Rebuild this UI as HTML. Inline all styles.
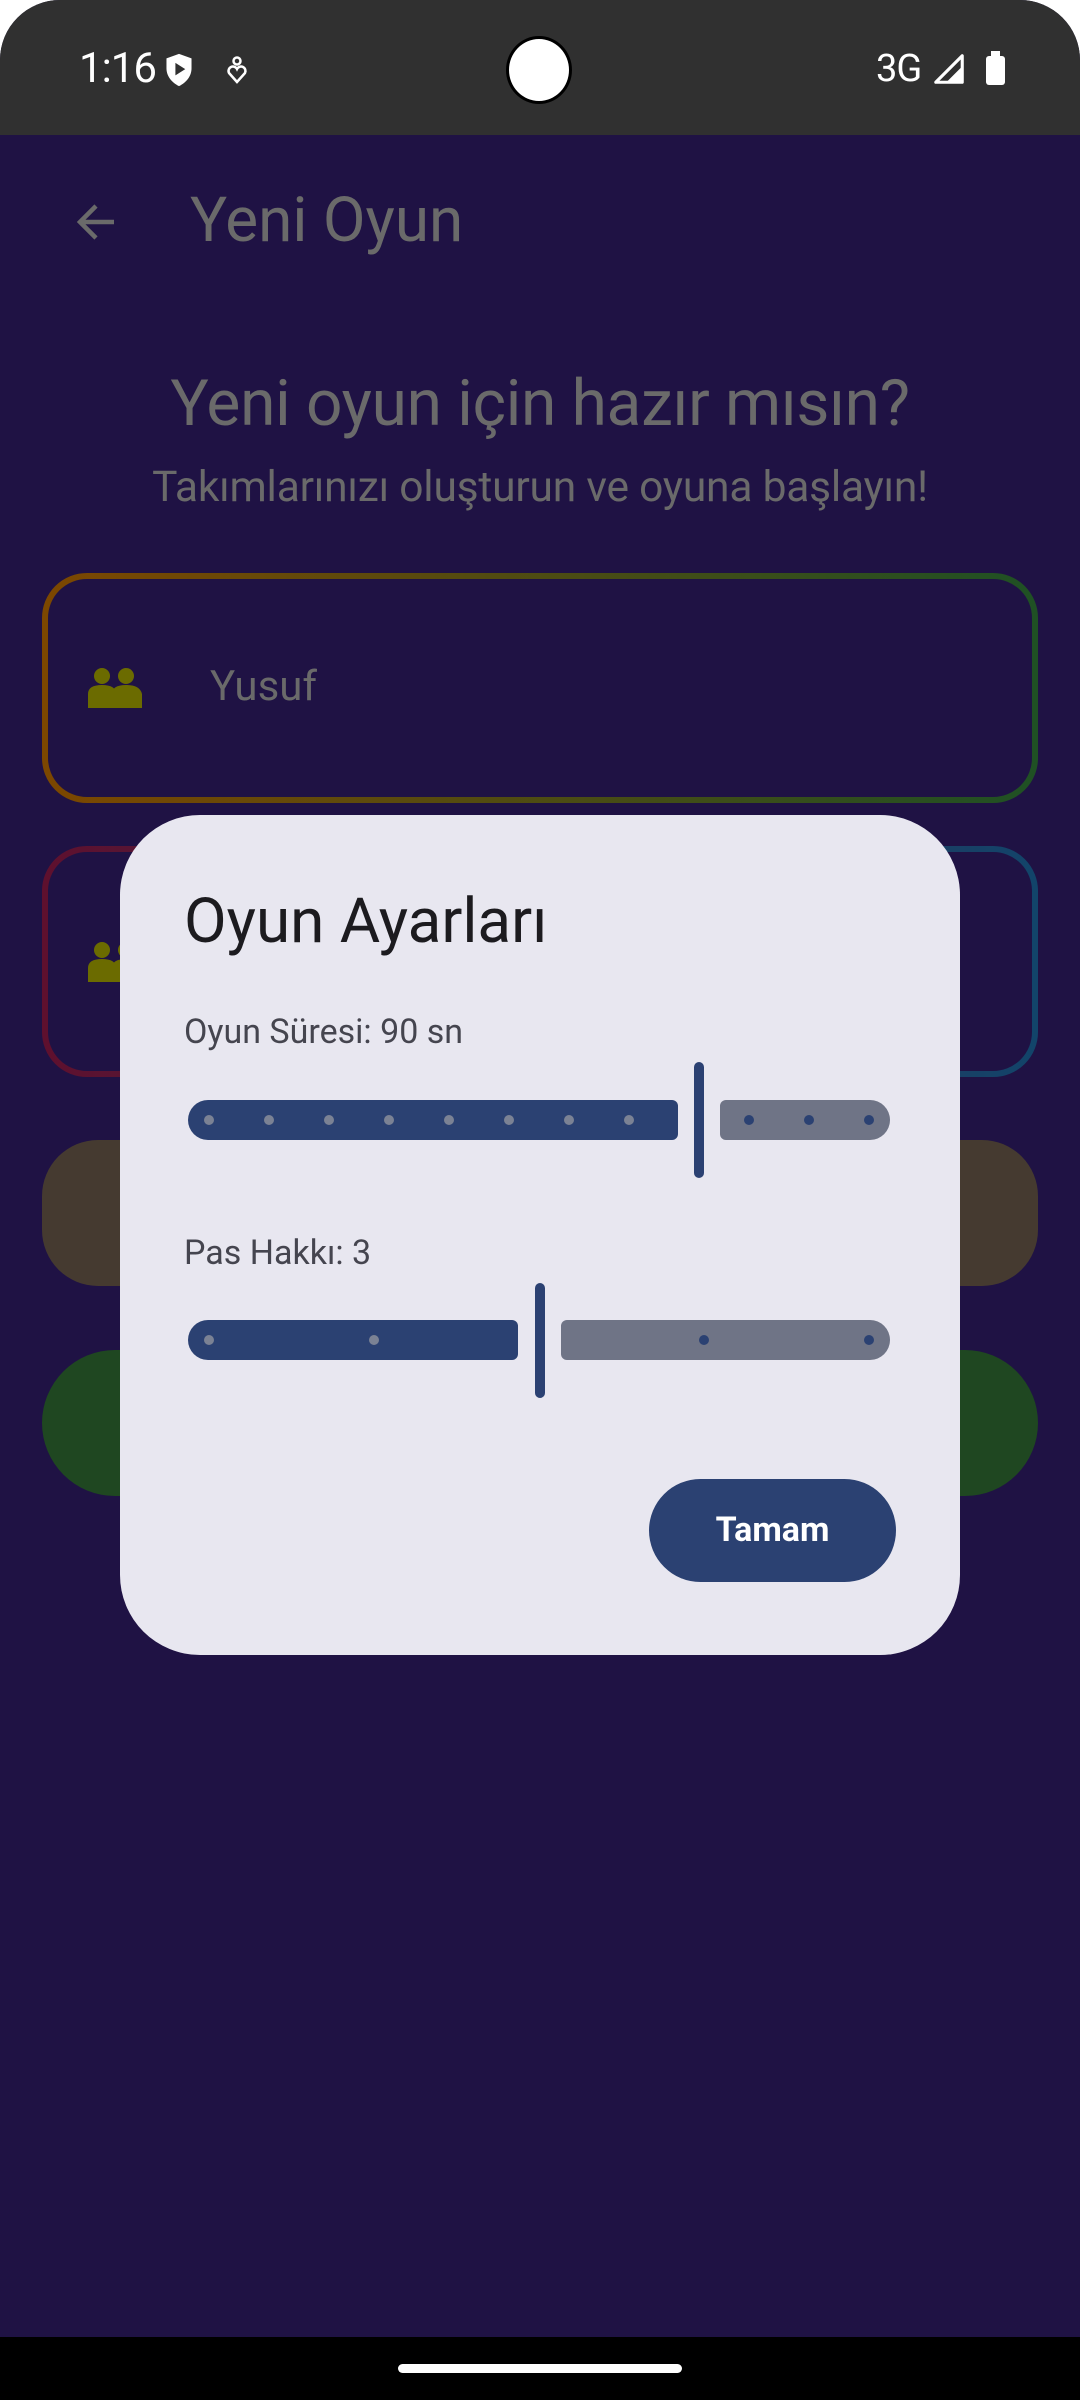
<!DOCTYPE html>
<html><head><meta charset="utf-8"><style>
*{margin:0;padding:0;box-sizing:border-box}
html,body{width:1080px;height:2400px;overflow:hidden;background:#fff}
body{font-family:"Roboto","Liberation Sans",sans-serif;position:relative}
.abs{position:absolute}
#screen{position:absolute;left:0;top:0;width:1080px;height:2400px;background:#1f1244;border-radius:60px 60px 0 0;overflow:hidden}
#status{left:0;top:0;width:1080px;height:135px;background:#303030}
.txt{white-space:nowrap;line-height:1}
.dot{position:absolute;width:10px;height:10px;border-radius:50%;top:15px}
</style></head><body>
<div id="screen">
<div id="status" class="abs"></div>
<div class="abs txt" style="left:79px;top:48px;font-size:42px;color:#fff;letter-spacing:-1px">1:16</div>
<svg class="abs" style="left:164px;top:53px" width="30" height="34" viewBox="0 0 32 38"><path d="M16 1L2 6v11c0 9 6 16 14 20 8-4 14-11 14-20V6z" fill="#fff"/><path d="M12 11v14l11-7z" fill="#303030"/></svg>
<svg class="abs" style="left:226px;top:56px" width="22" height="28" viewBox="0 0 22 28"><circle cx="11" cy="5" r="3.5" fill="none" stroke="#fff" stroke-width="2.5"/><path d="M11 26L3 17a4 4 0 0 1 8-4 4 4 0 0 1 8 4z" fill="none" stroke="#fff" stroke-width="2.5"/></svg>
<div class="abs" style="left:506px;top:36px;width:66px;height:68px;border-radius:50%;background:#fff;border:3px solid #000"></div>
<div class="abs txt" style="left:876px;top:50px;font-size:38px;color:#fff;letter-spacing:-1px">3G</div>
<svg class="abs" style="left:934px;top:54px" width="30" height="30" viewBox="0 0 34 34"><path d="M32 2V32H2Z" fill="none" stroke="#fff" stroke-width="3.5" stroke-linejoin="round"/><path d="M32 14V32H14Z" fill="#fff"/></svg>
<div class="abs" style="left:986px;top:56px;width:19px;height:29px;background:#fff;border-radius:3px"></div>
<div class="abs" style="left:991px;top:51px;width:9px;height:6px;background:#fff"></div>

<svg class="abs" style="left:72px;top:198px" width="48" height="48" viewBox="0 0 48 48"><path d="M42 24H8M24 8L8 24l16 16" fill="none" stroke="#6a6a6a" stroke-width="4.5"/></svg>
<div class="abs txt" style="left:190px;top:190px;font-size:62px;color:#6a6a6a">Yeni Oyun</div>
<div class="abs txt" style="left:0;width:1080px;text-align:center;top:372px;font-size:64px;color:#6a6a6a;letter-spacing:-0.3px">Yeni oyun için hazır mısın?</div>
<div class="abs txt" style="left:0;width:1080px;text-align:center;top:467px;font-size:42.5px;color:#6a6a6a;letter-spacing:-0.2px">Takımlarınızı oluşturun ve oyuna başlayın!</div>

<svg class="abs" style="left:42px;top:573px" width="996" height="230"><defs><linearGradient id="g1" x1="0" x2="1"><stop offset="0" stop-color="#7c4700"/><stop offset="1" stop-color="#1f5024"/></linearGradient><linearGradient id="g2" x1="0" x2="1"><stop offset="0" stop-color="#5e102e"/><stop offset="1" stop-color="#12446a"/></linearGradient></defs><rect x="3" y="3" width="990" height="224" rx="42" fill="#1f1244" stroke="url(#g1)" stroke-width="6"/></svg>
<svg class="abs" style="left:88px;top:668px" width="54" height="40" viewBox="0 0 54 40"><circle cx="14" cy="8" r="8" fill="#6b6b00"/><circle cx="38" cy="8" r="8" fill="#6b6b00"/><path d="M0 40V26q0-9 14-9t14 9V40z M24 40V26q0-9 14-9t16 9V40z" fill="#6b6b00"/></svg>
<div class="abs txt" style="left:210px;top:666px;font-size:42px;color:#6a6a6a">Yusuf</div>

<svg class="abs" style="left:42px;top:846px" width="996" height="231"><rect x="3" y="3" width="990" height="225" rx="42" fill="#1f1244" stroke="url(#g2)" stroke-width="6"/></svg>
<svg class="abs" style="left:88px;top:942px" width="54" height="40" viewBox="0 0 54 40"><circle cx="14" cy="8" r="8" fill="#6b6b00"/><circle cx="38" cy="8" r="8" fill="#6b6b00"/><path d="M0 40V26q0-9 14-9t14 9V40z M24 40V26q0-9 14-9t16 9V40z" fill="#6b6b00"/></svg>

<div class="abs" style="left:42px;top:1140px;width:996px;height:146px;background:#453a30;border-radius:56px"></div>
<div class="abs" style="left:42px;top:1350px;width:996px;height:146px;background:#1f4721;border-radius:73px"></div>

<div class="abs" style="left:120px;top:815px;width:840px;height:840px;background:#e8e7f0;border-radius:80px"></div>
<div class="abs txt" style="left:184px;top:891px;font-size:62px;color:#1c1b1f">Oyun Ayarları</div>
<div class="abs txt" style="left:184px;top:1015px;font-size:34px;color:#45454f">Oyun Süresi: 90 sn</div>

<div class="abs" style="left:188px;top:1100px;width:490px;height:40px;background:#2b4172;border-radius:20px 6px 6px 20px">
<div class="dot" style="left:16px;background:#7b8294"></div><div class="dot" style="left:76px;background:#7b8294"></div><div class="dot" style="left:136px;background:#7b8294"></div><div class="dot" style="left:196px;background:#7b8294"></div><div class="dot" style="left:256px;background:#7b8294"></div><div class="dot" style="left:316px;background:#7b8294"></div><div class="dot" style="left:376px;background:#7b8294"></div><div class="dot" style="left:436px;background:#7b8294"></div>
</div>
<div class="abs" style="left:694px;top:1062px;width:10px;height:116px;background:#2b4172;border-radius:5px"></div>
<div class="abs" style="left:720px;top:1100px;width:170px;height:40px;background:#6f7486;border-radius:6px 20px 20px 6px">
<div class="dot" style="left:24px;background:#2b4172"></div><div class="dot" style="left:84px;background:#2b4172"></div><div class="dot" style="left:144px;background:#2b4172"></div>
</div>

<div class="abs txt" style="left:184px;top:1236px;font-size:34px;color:#45454f">Pas Hakkı: 3</div>
<div class="abs" style="left:188px;top:1320px;width:330px;height:40px;background:#2b4172;border-radius:20px 6px 6px 20px">
<div class="dot" style="left:16px;background:#7b8294"></div><div class="dot" style="left:181px;background:#7b8294"></div>
</div>
<div class="abs" style="left:535px;top:1283px;width:10px;height:115px;background:#2b4172;border-radius:5px"></div>
<div class="abs" style="left:561px;top:1320px;width:329px;height:40px;background:#6f7486;border-radius:6px 20px 20px 6px">
<div class="dot" style="left:138px;background:#2b4172"></div><div class="dot" style="left:303px;background:#2b4172"></div>
</div>

<div class="abs txt" style="left:649px;top:1479px;width:247px;height:103px;background:#2b4172;border-radius:52px;color:#fff;font-size:34px;font-weight:bold;text-align:center;line-height:103px">Tamam</div>

<div class="abs" style="left:0;top:2337px;width:1080px;height:63px;background:#000"></div>
<div class="abs" style="left:398px;top:2364px;width:284px;height:9px;background:#fff;border-radius:5px"></div>
</div>
</body></html>
